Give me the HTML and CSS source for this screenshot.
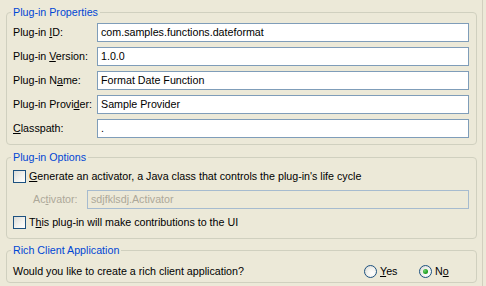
FILE: index.html
```html
<!DOCTYPE html>
<html>
<head>
<meta charset="utf-8">
<link rel="stylesheet" href="styles.css">
</head>
<body>
<div class="page">
  <fieldset class="group props">
    <legend>Plug-in Properties</legend>
    <div class="form">
      <span class="lbl">Plug-in <u>I</u>D:</span><div class="field">com.samples.functions.dateformat</div>
      <span class="lbl">Plug-in <u>V</u>ersion:</span><div class="field">1.0.0</div>
      <span class="lbl">Plug-in N<u>a</u>me:</span><div class="field">Format Date Function</div>
      <span class="lbl">Plug-in Provi<u>d</u>er:</span><div class="field">Sample Provider</div>
      <span class="lbl"><u>C</u>lasspath:</span><div class="field">.</div>
    </div>
  </fieldset>
  <fieldset class="group options">
    <legend>Plug-in Options</legend>
    <div class="check-row"><span class="checkbox"></span><span><u>G</u>enerate an activator, a Java class that controls the plug-in's life cycle</span></div>
    <div class="activator-row"><span class="lbl act-lbl">Ac<u>t</u>ivator:</span><div class="field disabled">sdjfklsdj.Activator</div></div>
    <div class="check-row"><span class="checkbox"></span><span>T<u>h</u>is plug-in will make contributions to the UI</span></div>
  </fieldset>
  <fieldset class="group rcp">
    <legend>Rich Client Application</legend>
    <div class="rcp-row">
      <span class="question">Would you like to create a rich client application?</span>
      <span class="radio-item yes"><span class="radio"></span><span><u>Y</u>es</span></span>
      <span class="radio-item no"><span class="radio checked"></span><span>N<u>o</u></span></span>
    </div>
  </fieldset>
</div>
</body>
</html>
```
FILE: styles.css
```css
html, body {
  margin: 0;
  padding: 0;
  background: #ECE9D8;
  height: 100%;
}
body {
  font-family: "Liberation Sans", Arial, sans-serif;
  font-size: 10.7px;
  color: #000;
  overflow: hidden;
}
.page {
  box-sizing: border-box;
  width: 483px;
  min-height: 100vh;
  padding: 5px 5px 0 6px;
  border-right: 1px solid #D2CFBF;
  display: flex;
  flex-direction: column;
}
u { text-decoration: underline; text-underline-offset: 1px; }
.group {
  margin: 0;
  min-width: 0;
  border: 1px solid #D0D0BF;
  border-radius: 4px;
  padding: 4px 7px 6px 6px;
}
.group legend {
  padding: 0 2px;
  margin-left: -2px;
  line-height: 14px;
  color: #0046D5;
}
.options { margin-top: 5px; padding: 6px 7px 9px 6px; }
.rcp { margin-top: 4px; padding: 7px 7px 4px 6px; }
.form {
  display: grid;
  grid-template-columns: 84px 1fr;
  grid-auto-rows: 19px;
  row-gap: 5px;
  align-items: center;
}
.lbl { line-height: 13px; white-space: nowrap; }
.field {
  box-sizing: border-box;
  height: 19px;
  border: 1px solid #7F9DB9;
  background: #fff;
  padding: 0 3px;
  line-height: 17px;
  white-space: nowrap;
  overflow: hidden;
}
.field.disabled {
  background: #ECE9D8;
  border-color: #A6BBCF;
  color: #ACA899;
  flex: 1;
}
.check-row {
  display: flex;
  align-items: center;
  height: 13px;
  line-height: 13px;
  gap: 3px;
  white-space: nowrap;
}
.checkbox {
  box-sizing: border-box;
  width: 13px;
  height: 13px;
  flex: none;
  border: 1px solid #1C5180;
  background: linear-gradient(135deg, #DCDCD7 0%, #F4F4F0 60%, #FFFFFF 100%);
}
.activator-row {
  display: flex;
  align-items: center;
  margin: 7px 0;
  padding-left: 20px;
}
.act-lbl { width: 54px; flex: none; color: #ACA899; }
.rcp-row {
  display: flex;
  align-items: center;
  height: 14px;
  line-height: 13px;
  white-space: nowrap;
}
.question { flex: 1; }
.radio-item {
  display: flex;
  align-items: center;
  gap: 3px;
  flex: none;
}
.radio-item.yes { width: 55px; }
.radio-item.no { width: 50px; }
.radio {
  box-sizing: border-box;
  width: 13px;
  height: 13px;
  border-radius: 50%;
  border: 1px solid #1C5180;
  background: radial-gradient(circle at 65% 65%, #FFFFFF 0%, #F2F2EE 45%, #D4D4CC 100%);
  display: flex;
  align-items: center;
  justify-content: center;
}
.radio.checked::after {
  content: "";
  width: 5px;
  height: 5px;
  border-radius: 50%;
  background: radial-gradient(circle at 35% 35%, #6FD06F 0%, #21A121 60%, #1A8A1A 100%);
}
```
